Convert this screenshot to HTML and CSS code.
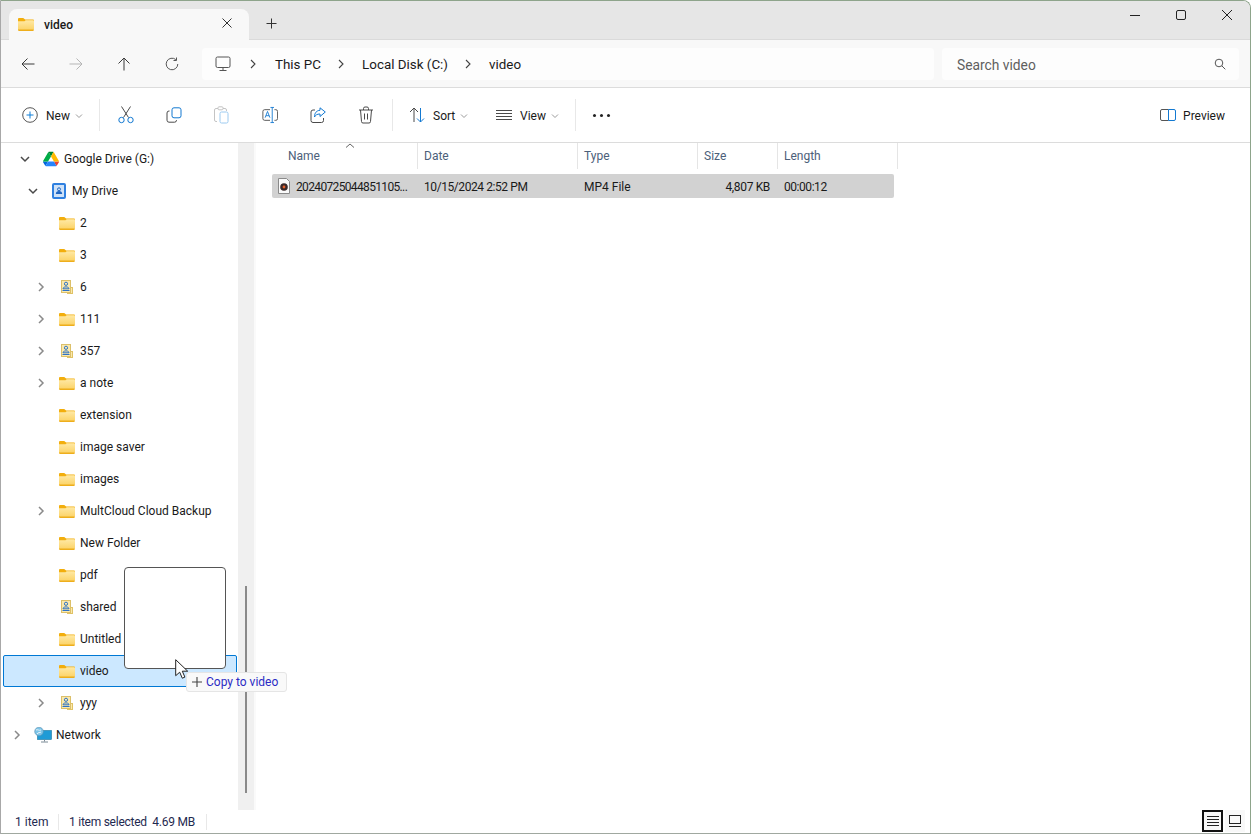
FILE: index.html
```html
<!DOCTYPE html>
<html lang="en">
<head>
<meta charset="utf-8">
<title>video</title>
<link rel="stylesheet" href="styles.css">
</head>
<body>
<svg class="defs" width="0" height="0" aria-hidden="true">
  <defs>
    <linearGradient id="fg" x1="0" y1="0" x2="0" y2="1"><stop offset="0" stop-color="#ffe9a6"/><stop offset="1" stop-color="#fbd264"/></linearGradient>
    <symbol id="folder" viewBox="0 0 16 14">
      <path d="M0 2.200C0 1.500.5 1 1.200 1h3.600c.4 0 .7.1 1 .4L7.200 2.600h7.600c.7 0 1.200.5 1.200 1.200v2H0z" fill="#f2ae0d"/>
      <path d="M0 4.200h6.500l1.200-1h7.100c.7 0 1.200.5 1.200 1.200v7.400c0 .7-.5 1.200-1.200 1.200H1.200C.5 14 0 13.500 0 12.800z" fill="url(#fg)"/>
      <path d="M0 12.600V12.800C0 13.500.5 14 1.200 14h13.600c.7 0 1.200-.5 1.200-1.200v-.2z" fill="#eeae1c"/>
    </symbol>
    <symbol id="shared" viewBox="0 0 16 16">
      <rect x="8.500" y="8.500" width="5" height="6" fill="#fbe9ad" stroke="#e0c266"/>
      <rect x="2.500" y="1.500" width="9" height="12" fill="#fbe9ad" stroke="#dcc06a"/>
      <circle cx="7" cy="4.800" r="1.600" fill="none" stroke="#2f73c4"/>
      <path d="M4 9.800c0-1.300 1.200-1.900 3-1.900s3 .6 3 1.900zM3.500 11.500h7" fill="none" stroke="#2f73c4"/>
    </symbol>
    <symbol id="chev-r" viewBox="0 0 10 10"><path d="M3 1l4 4-4 4" fill="none" stroke="#8a8a8a" stroke-width="1.500"/></symbol>
    <symbol id="chev-d" viewBox="0 0 10 10"><path d="M1 3l4 4 4-4" fill="none" stroke="#4a4a4a" stroke-width="1.500"/></symbol>
    <symbol id="small-d" viewBox="0 0 8 6"><path d="M1 1.500l3 3 3-3" fill="none" stroke="#9a9a9a"/></symbol>
    <symbol id="crumb" viewBox="0 0 8 12"><path d="M2 2l4 4-4 4" fill="none" stroke="#444" stroke-width="1.100"/></symbol>
  </defs>
</svg>

<div class="window">
  <header class="titlebar">
    <div class="tab">
      <svg class="ico16"><use href="#folder"/></svg>
      <span class="tab-name">video</span>
      <svg class="tab-close" viewBox="0 0 10 10"><path d="M.5.5l9 9M9.500.5l-9 9" stroke="#333" fill="none"/></svg>
    </div>
    <svg class="tab-plus" viewBox="0 0 11 11"><path d="M5.500.5v10M.5 5.500h10" stroke="#333" fill="none"/></svg>
    <div class="win-controls">
      <svg class="win-btn" viewBox="0 0 10 10"><path d="M0 5.500h10" stroke="#222" fill="none"/></svg>
      <svg class="win-btn" viewBox="0 0 10 10"><rect x=".5" y=".5" width="9" height="9" rx="1.500" fill="none" stroke="#222"/></svg>
      <svg class="win-btn" viewBox="0 0 10 10"><path d="M0 0l10 10M10 0L0 10" stroke="#222" fill="none"/></svg>
    </div>
  </header>

  <div class="addressbar">
    <div class="nav-btn"><svg viewBox="0 0 14 14"><path d="M13.500 7H1M6.500 1.500L1 7l5.500 5.500" fill="none" stroke="#3a3a3a"/></svg></div>
    <div class="nav-btn"><svg viewBox="0 0 14 14"><path d="M.5 7H13M7.500 1.500L13 7l-5.500 5.500" fill="none" stroke="#b5b5b5"/></svg></div>
    <div class="nav-btn"><svg viewBox="0 0 14 14"><path d="M7 13.500V1M1.500 6.500L7 1l5.500 5.500" fill="none" stroke="#3a3a3a"/></svg></div>
    <div class="nav-btn"><svg viewBox="0 0 14 14"><path d="M12.800 7a5.800 5.800 0 1 1-2-4.400M11.500 .5v3h-3" fill="none" stroke="#555"/></svg></div>
    <div class="address">
      <svg class="pc-ico" viewBox="0 0 16 16"><rect x="1" y="1" width="14" height="10.500" rx="1.500" fill="none" stroke="#555"/><path d="M8 11.500v2.500M4.500 14.500h7" stroke="#555" fill="none"/></svg>
      <svg class="crumb crumb-a"><use href="#crumb"/></svg>
      <span class="crumb-text">This PC</span>
      <svg class="crumb"><use href="#crumb"/></svg>
      <span class="crumb-text">Local Disk (C:)</span>
      <svg class="crumb"><use href="#crumb"/></svg>
      <span class="crumb-text">video</span>
    </div>
    <div class="search">
      <span class="search-text">Search video</span>
      <svg class="search-ico" viewBox="0 0 12 12"><circle cx="5" cy="5" r="3.800" fill="none" stroke="#555"/><path d="M7.800 7.800l3.500 3.500" stroke="#555" fill="none"/></svg>
    </div>
  </div>

  <div class="toolbar">
    <div class="tool-new">
      <svg class="ico16" viewBox="0 0 16 16"><circle cx="8" cy="8" r="7.300" fill="none" stroke="#555"/><path d="M8 4.500v7M4.500 8h7" stroke="#0f7ed8" fill="none"/></svg>
      <span class="tool-label">New</span>
      <svg class="drop"><use href="#small-d"/></svg>
    </div>
    <span class="divider"></span>
    <div class="tool-group">
      <div class="tool-icon"><svg viewBox="0 0 16 18"><path d="M3.500 .5L10.500 11.500M12.500 .5L5.500 11.500" stroke="#4a4a4a" fill="none"/><circle cx="3.500" cy="14" r="2.700" fill="none" stroke="#1379d1"/><circle cx="12.500" cy="14" r="2.700" fill="none" stroke="#1379d1"/></svg></div>
      <div class="tool-icon"><svg viewBox="0 0 16 16"><rect x="6" y=".8" width="9" height="10" rx="2" fill="none" stroke="#1379d1"/><path d="M3.500 4H3a2 2 0 0 0-2 2v7.200a2 2 0 0 0 2 2h5.500a2 2 0 0 0 2-2V13" fill="none" stroke="#4a4a4a"/></svg></div>
      <div class="tool-icon"><svg viewBox="0 0 16 18"><path d="M3 15.500H2a1.500 1.500 0 0 1-1.500-1.500V4A1.500 1.500 0 0 1 2 2.500h9A1.500 1.500 0 0 1 12.500 4v1" fill="none" stroke="#c4c4c4"/><rect x="4" y=".8" width="5" height="3" rx="1" fill="#fff" stroke="#c4c4c4"/><rect x="6" y="6" width="8" height="11" rx="1.500" fill="none" stroke="#9ccaf0"/></svg></div>
      <div class="tool-icon"><svg viewBox="0 0 18 18"><path d="M9 3H3a2 2 0 0 0-2 2v8a2 2 0 0 0 2 2h6M14 3h1.500a2 2 0 0 1 2 2v8a2 2 0 0 1-2 2H14" fill="none" stroke="#4a4a4a"/><path d="M11.500 .5v17M9.500.5h4M9.500 17.500h4" fill="none" stroke="#1379d1"/><path d="M3.500 12l2.700-7 2.700 7M4.500 9.800h3.500" fill="none" stroke="#1379d1"/></svg></div>
      <div class="tool-icon"><svg viewBox="0 0 16 16"><path d="M5 3H3a2 2 0 0 0-2 2v8.500a2 2 0 0 0 2 2h8.500a2 2 0 0 0 2-2V11" fill="none" stroke="#4a4a4a"/><path d="M10 .8L15.300 5 10 9.500V7c-3 0-4.500 1-5.500 3 0-4 2-6.500 5.500-6.700z" fill="none" stroke="#1379d1"/></svg></div>
      <div class="tool-icon"><svg viewBox="0 0 16 18"><path d="M1 4h14M5.500 4V2.500a1.500 1.500 0 0 1 1.500-1.500h2a1.500 1.500 0 0 1 1.500 1.500V4M2.500 4l1 11.500a1.500 1.500 0 0 0 1.500 1.500h6a1.500 1.500 0 0 0 1.500-1.500l1-11.500M6.500 7.500v6M9.500 7.500v6" fill="none" stroke="#4a4a4a"/></svg></div>
    </div>
    <span class="divider"></span>
    <div class="tool-text tool-sort">
      <svg class="ico16" viewBox="0 0 16 16"><path d="M5 15V1M1 5l4-4 4 4" fill="none" stroke="#4a4a4a"/><path d="M11.500 1v14M8 11.500l3.500 3.500 3.500-3.500" fill="none" stroke="#1379d1"/></svg>
      <span class="tool-label">Sort</span>
      <svg class="drop"><use href="#small-d"/></svg>
    </div>
    <div class="tool-text tool-view">
      <svg class="ico16" viewBox="0 0 16 16"><path d="M0 3.500h16M0 6.500h16M0 9.500h16M0 12.500h16" stroke="#4a4a4a" fill="none"/></svg>
      <span class="tool-label">View</span>
      <svg class="drop"><use href="#small-d"/></svg>
    </div>
    <span class="divider"></span>
    <div class="tool-more"><i></i><i></i><i></i></div>
    <div class="tool-preview">
      <svg class="ico16" viewBox="0 0 16 12"><path d="M8.500 .5H2A1.500 1.500 0 0 0 .5 2v8A1.500 1.500 0 0 0 2 11.500h6.500" fill="none" stroke="#555"/><path d="M8.500 .5H14A1.500 1.500 0 0 1 15.500 2v8a1.500 1.500 0 0 1-1.500 1.500H8.500z" fill="none" stroke="#1379d1"/></svg>
      <span class="tool-label">Preview</span>
    </div>
  </div>

  <main class="main">
    <nav class="tree">
      <div class="row lvl1"><svg class="chev"><use href="#chev-d"/></svg>
        <svg class="ico16 gd" viewBox="0 0 87.300 78"><path d="m6.600 66.850 3.850 6.650c.8 1.400 1.950 2.500 3.300 3.300l13.750-23.800h-27.500c0 1.550.4 3.100 1.200 4.500z" fill="#0066da"/><path d="m43.650 25-13.750-23.800c-1.350.8-2.500 1.900-3.300 3.300l-25.400 44a9.060 9.060 0 0 0 -1.200 4.500h27.500z" fill="#00ac47"/><path d="m73.550 76.800c1.350-.8 2.500-1.900 3.300-3.300l1.600-2.750 7.650-13.250c.8-1.400 1.200-2.950 1.200-4.500h-27.502l5.852 11.500z" fill="#ea4335"/><path d="m43.650 25 13.750-23.800c-1.350-.8-2.900-1.200-4.500-1.200h-18.500c-1.600 0-3.150.45-4.500 1.200z" fill="#00832d"/><path d="m59.800 53h-32.300l-13.750 23.800c1.350.8 2.900 1.200 4.500 1.200h50.800c1.600 0 3.150-.45 4.500-1.200z" fill="#2684fc"/><path d="m73.400 26.500-12.700-22c-.8-1.400-1.950-2.500-3.300-3.300l-13.750 23.800 16.150 28h27.450c0-1.550-.4-3.100-1.200-4.500z" fill="#ffba00"/></svg>
        <span>Google Drive (G:)</span></div>
      <div class="row lvl2"><svg class="chev"><use href="#chev-d"/></svg>
        <svg class="ico16" viewBox="0 0 16 16"><rect x="2" y="1" width="12" height="14" rx="1" fill="#cfe2f8" stroke="#2f80e0" stroke-width="2"/><circle cx="8" cy="6.300" r="1.500" fill="none" stroke="#1f66c2"/><path d="M4.800 11c0-1.800 1.300-3 3.200-3s3.200 1.200 3.200 3z" fill="#1f66c2"/></svg>
        <span>My Drive</span></div>
      <div class="row lvl3"><span class="chev"></span><svg class="ico16"><use href="#folder"/></svg><span>2</span></div>
      <div class="row lvl3"><span class="chev"></span><svg class="ico16"><use href="#folder"/></svg><span>3</span></div>
      <div class="row lvl3"><svg class="chev"><use href="#chev-r"/></svg><svg class="ico16"><use href="#shared"/></svg><span>6</span></div>
      <div class="row lvl3"><svg class="chev"><use href="#chev-r"/></svg><svg class="ico16"><use href="#folder"/></svg><span>111</span></div>
      <div class="row lvl3"><svg class="chev"><use href="#chev-r"/></svg><svg class="ico16"><use href="#shared"/></svg><span>357</span></div>
      <div class="row lvl3"><svg class="chev"><use href="#chev-r"/></svg><svg class="ico16"><use href="#folder"/></svg><span>a note</span></div>
      <div class="row lvl3"><span class="chev"></span><svg class="ico16"><use href="#folder"/></svg><span>extension</span></div>
      <div class="row lvl3"><span class="chev"></span><svg class="ico16"><use href="#folder"/></svg><span>image saver</span></div>
      <div class="row lvl3"><span class="chev"></span><svg class="ico16"><use href="#folder"/></svg><span>images</span></div>
      <div class="row lvl3"><svg class="chev"><use href="#chev-r"/></svg><svg class="ico16"><use href="#folder"/></svg><span>MultCloud Cloud Backup</span></div>
      <div class="row lvl3"><span class="chev"></span><svg class="ico16"><use href="#folder"/></svg><span>New Folder</span></div>
      <div class="row lvl3"><span class="chev"></span><svg class="ico16"><use href="#folder"/></svg><span>pdf</span></div>
      <div class="row lvl3"><span class="chev"></span><svg class="ico16"><use href="#shared"/></svg><span>shared</span></div>
      <div class="row lvl3"><span class="chev"></span><svg class="ico16"><use href="#folder"/></svg><span>Untitled</span></div>
      <div class="row lvl3 selected"><span class="chev"></span><svg class="ico16"><use href="#folder"/></svg><span>video</span></div>
      <div class="row lvl3"><svg class="chev"><use href="#chev-r"/></svg><svg class="ico16"><use href="#shared"/></svg><span>yyy</span></div>
      <div class="row lvl0"><svg class="chev"><use href="#chev-r"/></svg>
        <svg class="ico16 net" viewBox="0 0 18 16"><rect x="3.500" y="3.500" width="14" height="9" fill="#1f9bd6" stroke="#16759f" stroke-width=".6"/><path d="M10.500 12.500v2M7 15h7" stroke="#7a8a96" fill="none"/><circle cx="5" cy="4.500" r="4.300" fill="#7cc4e8" stroke="#5a8fae" stroke-width=".6"/><path d="M2 3c2-1 3 1 5 0M3 7c1-2 3-1 4-2" stroke="#e6f4fb" fill="none"/></svg>
        <span>Network</span></div>
    </nav>
    <div class="scroll-strip"><div class="scroll-thumb"></div></div>
    <section class="content">
      <div class="columns">
        <div class="col col-name">Name<svg class="sort-arrow" viewBox="0 0 10 5"><path d="M1 4.500l4-3.500 4 3.500" fill="none" stroke="#666"/></svg></div>
        <div class="col col-date">Date</div>
        <div class="col col-type">Type</div>
        <div class="col col-size">Size</div>
        <div class="col col-length">Length</div>
      </div>
      <div class="file">
        <div class="cell cell-name">
          <svg class="file-ico" viewBox="0 0 12 16"><path d="M.5.500h8l3 3v12H.5z" fill="#fafafa" stroke="#8a8a8a"/><circle cx="6" cy="9" r="3.800" fill="#3a2a2a"/><circle cx="6" cy="9" r="1.400" fill="#e8622c"/></svg>
          <span class="file-title">20240725044851105...</span>
        </div>
        <div class="cell cell-date">10/15/2024 2:52 PM</div>
        <div class="cell cell-type">MP4 File</div>
        <div class="cell cell-size">4,807 KB</div>
        <div class="cell cell-length">00:00:12</div>
      </div>
    </section>
  </main>

  <footer class="status">
    <span class="st-count">1 item</span>
    <span class="st-sep"></span>
    <span class="st-sel">1 item selected&nbsp; 4.69 MB</span>
    <span class="st-sep"></span>
    <div class="view-btns">
      <div class="vbtn vbtn-on"><svg viewBox="0 0 12 10"><path d="M0 .5h12M0 3.500h12M0 6.500h12M0 9.500h12" stroke="#222" fill="none"/></svg></div>
      <div class="vbtn"><svg viewBox="0 0 12 12"><rect x=".5" y=".5" width="11" height="8" fill="none" stroke="#222"/><path d="M0 11.500h12" stroke="#222" fill="none"/></svg></div>
    </div>
  </footer>
</div>

<div class="drag-box"></div>
<svg class="cursor" viewBox="0 0 13 20"><path d="M.7.700v16l4-3.500 2.600 6 2.600-1.100-2.600-5.900h5.400z" fill="#fff" stroke="#222" stroke-width="1"/></svg>
<div class="drag-tip">
  <svg viewBox="0 0 10 10"><path d="M5 0v10M0 5h10" stroke="#444" fill="none" stroke-width="1.100"/></svg>
  <span>Copy to video</span>
</div>
</body>
</html>
```
FILE: styles.css
```css
* { box-sizing: border-box; }
html, body { margin: 0; height: 100%; overflow: hidden; background: #fff; }
body { font-family: Roboto, "Open Sans", "Liberation Sans", sans-serif; font-size: 12px; color: #1a1a1a; position: relative; }
.defs { position: absolute; }
svg { display: block; flex: none; }
.ico16 { width: 16px; height: 16px; }

.window { width: 1251px; height: 834px; display: flex; flex-direction: column; border-top: 1px solid #8ea48b; border-right: 1px solid #8ea48b; border-left: 1px solid #a8a8a8; border-top-right-radius: 8px; overflow: hidden; background: #fff; }

.titlebar { height: 39px; background: #e6e6e6; display: flex; align-items: flex-end; padding-left: 8px; flex: none; border-bottom: 1px solid #dadada; }
.tab { width: 240px; height: 31px; background: #f8f8f8; border-radius: 8px 8px 0 0; display: flex; align-items: center; padding: 0 0 1px 9px; margin-bottom: -1px; }
.tab-name { margin-left: 10px; padding-top: 1px; font-size: 12px; font-weight: 500; flex: 1; }
.tab-close { width: 10px; height: 10px; margin-right: 17px; margin-top: -2px; }
.tab-plus { width: 11px; height: 11px; margin: 0 0 10px 17px; }
.win-controls { margin-left: auto; height: 38px; display: flex; align-items: flex-start; gap: 36px; padding: 9px 18px 0 0; align-self: flex-start; }
.win-btn { width: 10px; height: 10px; }

.addressbar { height: 48px; background: #f8f8f8; border-bottom: 1px solid #dcdcdc; display: flex; align-items: center; flex: none; }
.nav-btn { width: 48px; height: 32px; display: flex; align-items: center; justify-content: center; }
.nav-btn:first-child { margin-left: 3px; }
.nav-btn svg { width: 14px; height: 14px; }
.address { width: 732px; height: 32px; margin-left: 6px; background: #fdfdfd; border-radius: 4px; display: flex; align-items: center; padding-left: 13px; font-size: 13.4px; }
.pc-ico { width: 16px; height: 16px; margin-right: 18px; }
.crumb { width: 8px; height: 12px; }
.crumb-a { margin-right: 1px; }
.crumb-text { margin-left: 17px; margin-right: 16px; padding-top: 2px; }
.search { width: 297px; height: 32px; margin-left: 8px; background: #fdfdfd; border-radius: 4px; display: flex; align-items: center; padding: 0 13px 0 15px; font-size: 13.8px; color: #5f5f5f; justify-content: space-between; }
.search-text { padding-top: 2px; }
.search-ico { width: 12px; height: 12px; }

.toolbar { height: 55px; background: #fff; border-bottom: 1px solid #dcdcdc; display: flex; align-items: center; flex: none; padding-left: 21px; }
.tool-new { display: flex; align-items: center; width: 77px; }
.tool-label { margin-left: 8px; padding-top: 2px; font-size: 12px; }
.drop { width: 8px; height: 6px; margin-left: 5px; margin-top: 2px; }
.divider { width: 1px; height: 32px; background: #e8e8e8; }
.tool-group { display: flex; margin: 0 2px; }
.tool-icon { width: 48px; display: flex; justify-content: center; }
.tool-icon svg { width: 16px; height: 18px; }
.tool-text { display: flex; align-items: center; }
.tool-sort { margin-left: 16px; width: 87px; }
.tool-view { width: 79px; }
.tool-more { display: flex; gap: 3px; margin-left: 17px; }
.tool-more i { width: 3px; height: 3px; border-radius: 50%; background: #222; display: block; margin-right: 1px; }
.tool-preview { margin-left: auto; margin-right: 25px; display: flex; align-items: center; }
.tool-preview .tool-label { margin-left: 7px; }

.main { flex: 1; min-height: 0; display: flex; }
.tree { width: 237px; flex: none; overflow: hidden; }
.row { height: 32px; display: flex; align-items: center; font-size: 12px; }
.row > span:last-child { margin-left: 5px; white-space: nowrap; }
.chev { width: 16px; height: 16px; padding: 3px; margin-right: 10px; flex: none; }
.lvl0 { padding-left: 8px; }
.lvl1 { padding-left: 16px; }
.lvl2 { padding-left: 24px; }
.lvl3 { padding-left: 32px; }
.selected { background: #cce8ff; border: 1px solid #0078d4; border-radius: 2px; margin: 0 1px 0 2px; padding-left: 29px; }
.net { width: 18px; margin-left: -1px; margin-right: -1px; }

.scroll-strip { width: 16px; background: #f0f0f0; flex: none; display: flex; flex-direction: column; justify-content: flex-end; align-items: center; padding-bottom: 17px; }
.scroll-thumb { width: 2px; height: 207px; background: #8a8a8a; }

.content { flex: 1; min-width: 0; padding-left: 16px; border-left: 2px solid #fafafa; }
.columns { display: flex; height: 26px; margin-bottom: 5px; }
.col { position: relative; color: #4c607a; font-size: 12px; line-height: 26px; padding-left: 6px; border-right: 1px solid #e5e5e5; }
.col-name { width: 146px; padding-left: 16px; }
.col-date { width: 160px; }
.col-type { width: 120px; }
.col-size { width: 80px; }
.col-length { width: 120px; }
.sort-arrow { position: absolute; left: 73px; top: 0; width: 10px; height: 5px; }
.file { width: 622px; height: 24px; background: #d2d2d2; border-radius: 2px; display: flex; align-items: center; padding-top: 1px; }
.cell { white-space: nowrap; letter-spacing: -0.35px; }
.cell-name { width: 146px; padding-left: 6px; display: flex; align-items: center; gap: 6px; }
.file-title { letter-spacing: -0.65px; }
.file-ico { width: 12px; height: 16px; margin-top: -1px; }
.cell-date { width: 160px; padding-left: 6px; letter-spacing: -0.42px; }
.cell-type { width: 120px; padding-left: 6px; letter-spacing: 0; }
.cell-size { width: 80px; padding-right: 8px; text-align: right; }
.cell-length { padding-left: 6px; letter-spacing: -0.45px; }

.status { height: 24px; flex: none; border-bottom: 1px solid #a0a8a0; display: flex; align-items: center; font-size: 12px; color: #1f2a50; padding-left: 14px; }
.st-count { width: 43px; }
.st-sep { width: 1px; height: 16px; background: #e8e8e8; }
.st-sel { margin-left: 10px; width: 137px; letter-spacing: -0.25px; }
.view-btns { margin-left: auto; margin-right: 5px; display: flex; gap: 2px; align-self: flex-start; }
.vbtn { width: 20px; height: 22px; display: flex; align-items: center; justify-content: center; background: #f8f8f8; }
.vbtn svg { width: 12px; height: 12px; }
.vbtn-on { border: 2px solid #111; width: 21px; }

.drag-box { position: absolute; left: 124px; top: 567px; width: 102px; height: 102px; background: #fff; border: 1px solid #555; border-radius: 4px; }
.cursor { position: absolute; left: 175px; top: 659px; width: 13px; height: 20px; }
.drag-tip { position: absolute; left: 186px; top: 672px; width: 101px; height: 20px; background: #f9f9f9; border: 1px solid #e5e5e5; border-radius: 3px; display: flex; align-items: center; padding-left: 5px; gap: 4px; color: #2b2bc4; font-size: 12px; }
.drag-tip svg { width: 10px; height: 10px; }
```
